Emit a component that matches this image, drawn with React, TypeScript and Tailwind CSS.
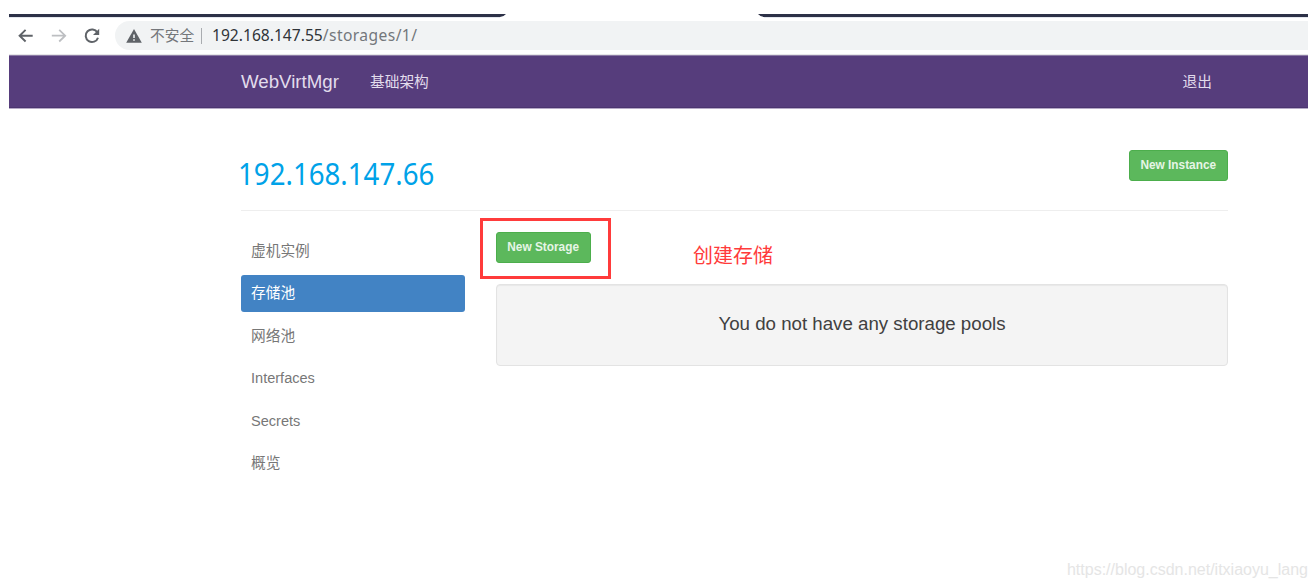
import { clsx } from "clsx";

const NAV_ITEMS = [
  { id: "instances", label: "虚机实例" },
  { id: "storages", label: "存储池" },
  { id: "networks", label: "网络池" },
  { id: "interfaces", label: "Interfaces" },
  { id: "secrets", label: "Secrets" },
  { id: "overview", label: "概览" }
];

function TabStrip() {
  return (
    <svg className="block h-[4px] w-full" viewBox="0 0 1299 4" preserveAspectRatio="none">
      <path d="M0 0H497Q494.500 3 491 3H0Z" fill="#2c3147" />
      <path d="M749 0H1299V3H755Q751.500 3 749 0Z" fill="#2c3147" />
      <path d="M0 3H491V4H0ZM755 3H1299V4H755Z" fill="#e4e7ee" />
    </svg>
  );
}

function AddressBar() {
  return (
    <div className="flex h-[36px] items-start bg-white pt-[3px]">
      <div className="flex h-[29px] w-[106px] items-center">
        <svg className="ml-[9px] h-[16px] w-[16px]" viewBox="0 0 16 16" fill="none" stroke="#5f6368" strokeWidth="1.900">
          <path d="M14.700 7.700H1.600M7.600 1.900L1.600 7.700L7.600 13.500" />
        </svg>
        <svg className="ml-[17px] h-[16px] w-[16px]" viewBox="0 0 16 16" fill="none" stroke="#bdbfc2" strokeWidth="1.800">
          <path d="M.8 7.700H14.100M8.200 1.900L14.200 7.700L8.200 13.500" />
        </svg>
        <svg className="ml-[17px] h-[16px] w-[16px]" viewBox="0 0 16 16">
          <path d="M13.400 4.500A6.300 6.300 0 1 0 14 9.700" fill="none" stroke="#5f6368" strokeWidth="2" />
          <path d="M15.200 .7V7H9Z" fill="#5f6368" />
        </svg>
      </div>
      <div className="flex h-[29px] flex-1 items-center rounded-l-full bg-[#f1f3f4]">
        <svg className="ml-[11px] h-[14px] w-[16px]" viewBox="0 0 16 14">
          <path d="M8 0L15.800 13.700H.2Z" fill="#5f6368" />
          <path d="M7.200 5.500H8.800V9H7.200ZM7.200 10.200H8.800V11.800H7.200Z" fill="#f1f3f4" />
        </svg>
        <span className="ml-[8px] w-[51px] pt-[2px] text-[14.700px] leading-none text-[#74777b]">不安全</span>
        <span className="h-[16px] w-px bg-[#a9acb0]" />
        <span className="ml-[10px] origin-left scale-x-[.93] pb-[1px] whitespace-nowrap font-['Noto_Sans'] text-[16.800px] leading-none text-[#303438]">
          192.168.147.55<span className="tracking-[.45px] text-[#73777b]">/storages/1/</span>
        </span>
      </div>
    </div>
  );
}

function Navbar() {
  return (
    <nav className="flex h-[53px] items-center border-t border-b border-t-[#8c7ba5] border-b-[#4b3570] bg-[#563d7c] pt-[2px] pr-[96px] pl-[232px] text-[14.700px] text-[#e2dcec]">
      <span className="w-[129px] text-[18.700px]">WebVirtMgr</span>
      <span>基础架构</span>
      <span className="ml-auto">退出</span>
    </nav>
  );
}

function GreenButton({ label, className }: { label: string; className: string }) {
  return (
    <button
      className={clsx(
        "h-[31px] rounded-[3px] border border-[#4cae4c] bg-[#5cb85c] text-[12.600px] leading-none font-bold whitespace-nowrap text-[#e6f5e6]",
        className
      )}
    >
      <span className="inline-block scale-x-[.94]">{label}</span>
    </button>
  );
}

function Sidebar() {
  return (
    <ul className="mt-[21px] flex w-[224px] flex-col gap-[5.500px]">
      {NAV_ITEMS.map((item) => (
        <li
          key={item.id}
          className={clsx(
            "flex h-[37px] items-center rounded-[3px] pt-[1px] pl-[10px] text-[14.700px]",
            item.id === "storages" ? "bg-[#4283c4] text-white" : "text-[#777777]"
          )}
        >
          <span className={clsx(/^[A-Z]/.test(item.label) && "origin-left scale-x-[.99]")}>{item.label}</span>
        </li>
      ))}
    </ul>
  );
}

export default function App() {
  return (
    <div className="h-[587px] overflow-hidden bg-white pt-[14px] pr-[8px] pl-[9px] font-['Liberation_Sans','Noto_Sans_CJK_SC',sans-serif]">
      <TabStrip />
      <AddressBar />
      <div className="h-px bg-[#e6e6e8]" />
      <Navbar />
      <div className="h-px bg-[#b5a9c6]" />

      <main className="ml-[232px] w-[987px]">
        <header className="flex h-[102px] items-start justify-between border-b border-[#eeeeee]">
          <h1 className="mt-[50px] -ml-[3px] origin-left scale-x-[.922] font-['Noto_Sans'] text-[30px] leading-[30px] text-[#00a2e8]">
            192.168.147.66
          </h1>
          <GreenButton label="New Instance" className="mt-[41px] w-[99px]" />
        </header>

        <div className="flex">
          <Sidebar />
          <section className="ml-[15px] w-[748px]">
            <div className="mt-[7px] flex">
              <div className="h-[61px] w-[131px] border-[3px] border-[#ff3b3b] pt-[11px] pl-[13px]">
                <GreenButton label="New Storage" className="block w-[95px]" />
              </div>
              <span className="mt-[28px] ml-[82px] text-[20px] leading-[20px] text-[#ff3b3b]">创建存储</span>
            </div>
            <div className="mt-[5px] ml-[16px] flex h-[82px] items-center justify-center rounded-[4px] border border-[#e3e3e3] bg-[#f4f4f4] pb-[2px] shadow-[inset_0_1px_1px_rgba(0,0,0,0.05)]">
              <p className="text-[18.700px] text-[#404040]">You do not have any storage pools</p>
            </div>
          </section>
        </div>
      </main>

      <footer className="mt-[76px] flex justify-end">
        <span className="text-[16px] text-[#e5e5e5]">https://blog.csdn.net/itxiaoyu_lang</span>
      </footer>
    </div>
  );
}
